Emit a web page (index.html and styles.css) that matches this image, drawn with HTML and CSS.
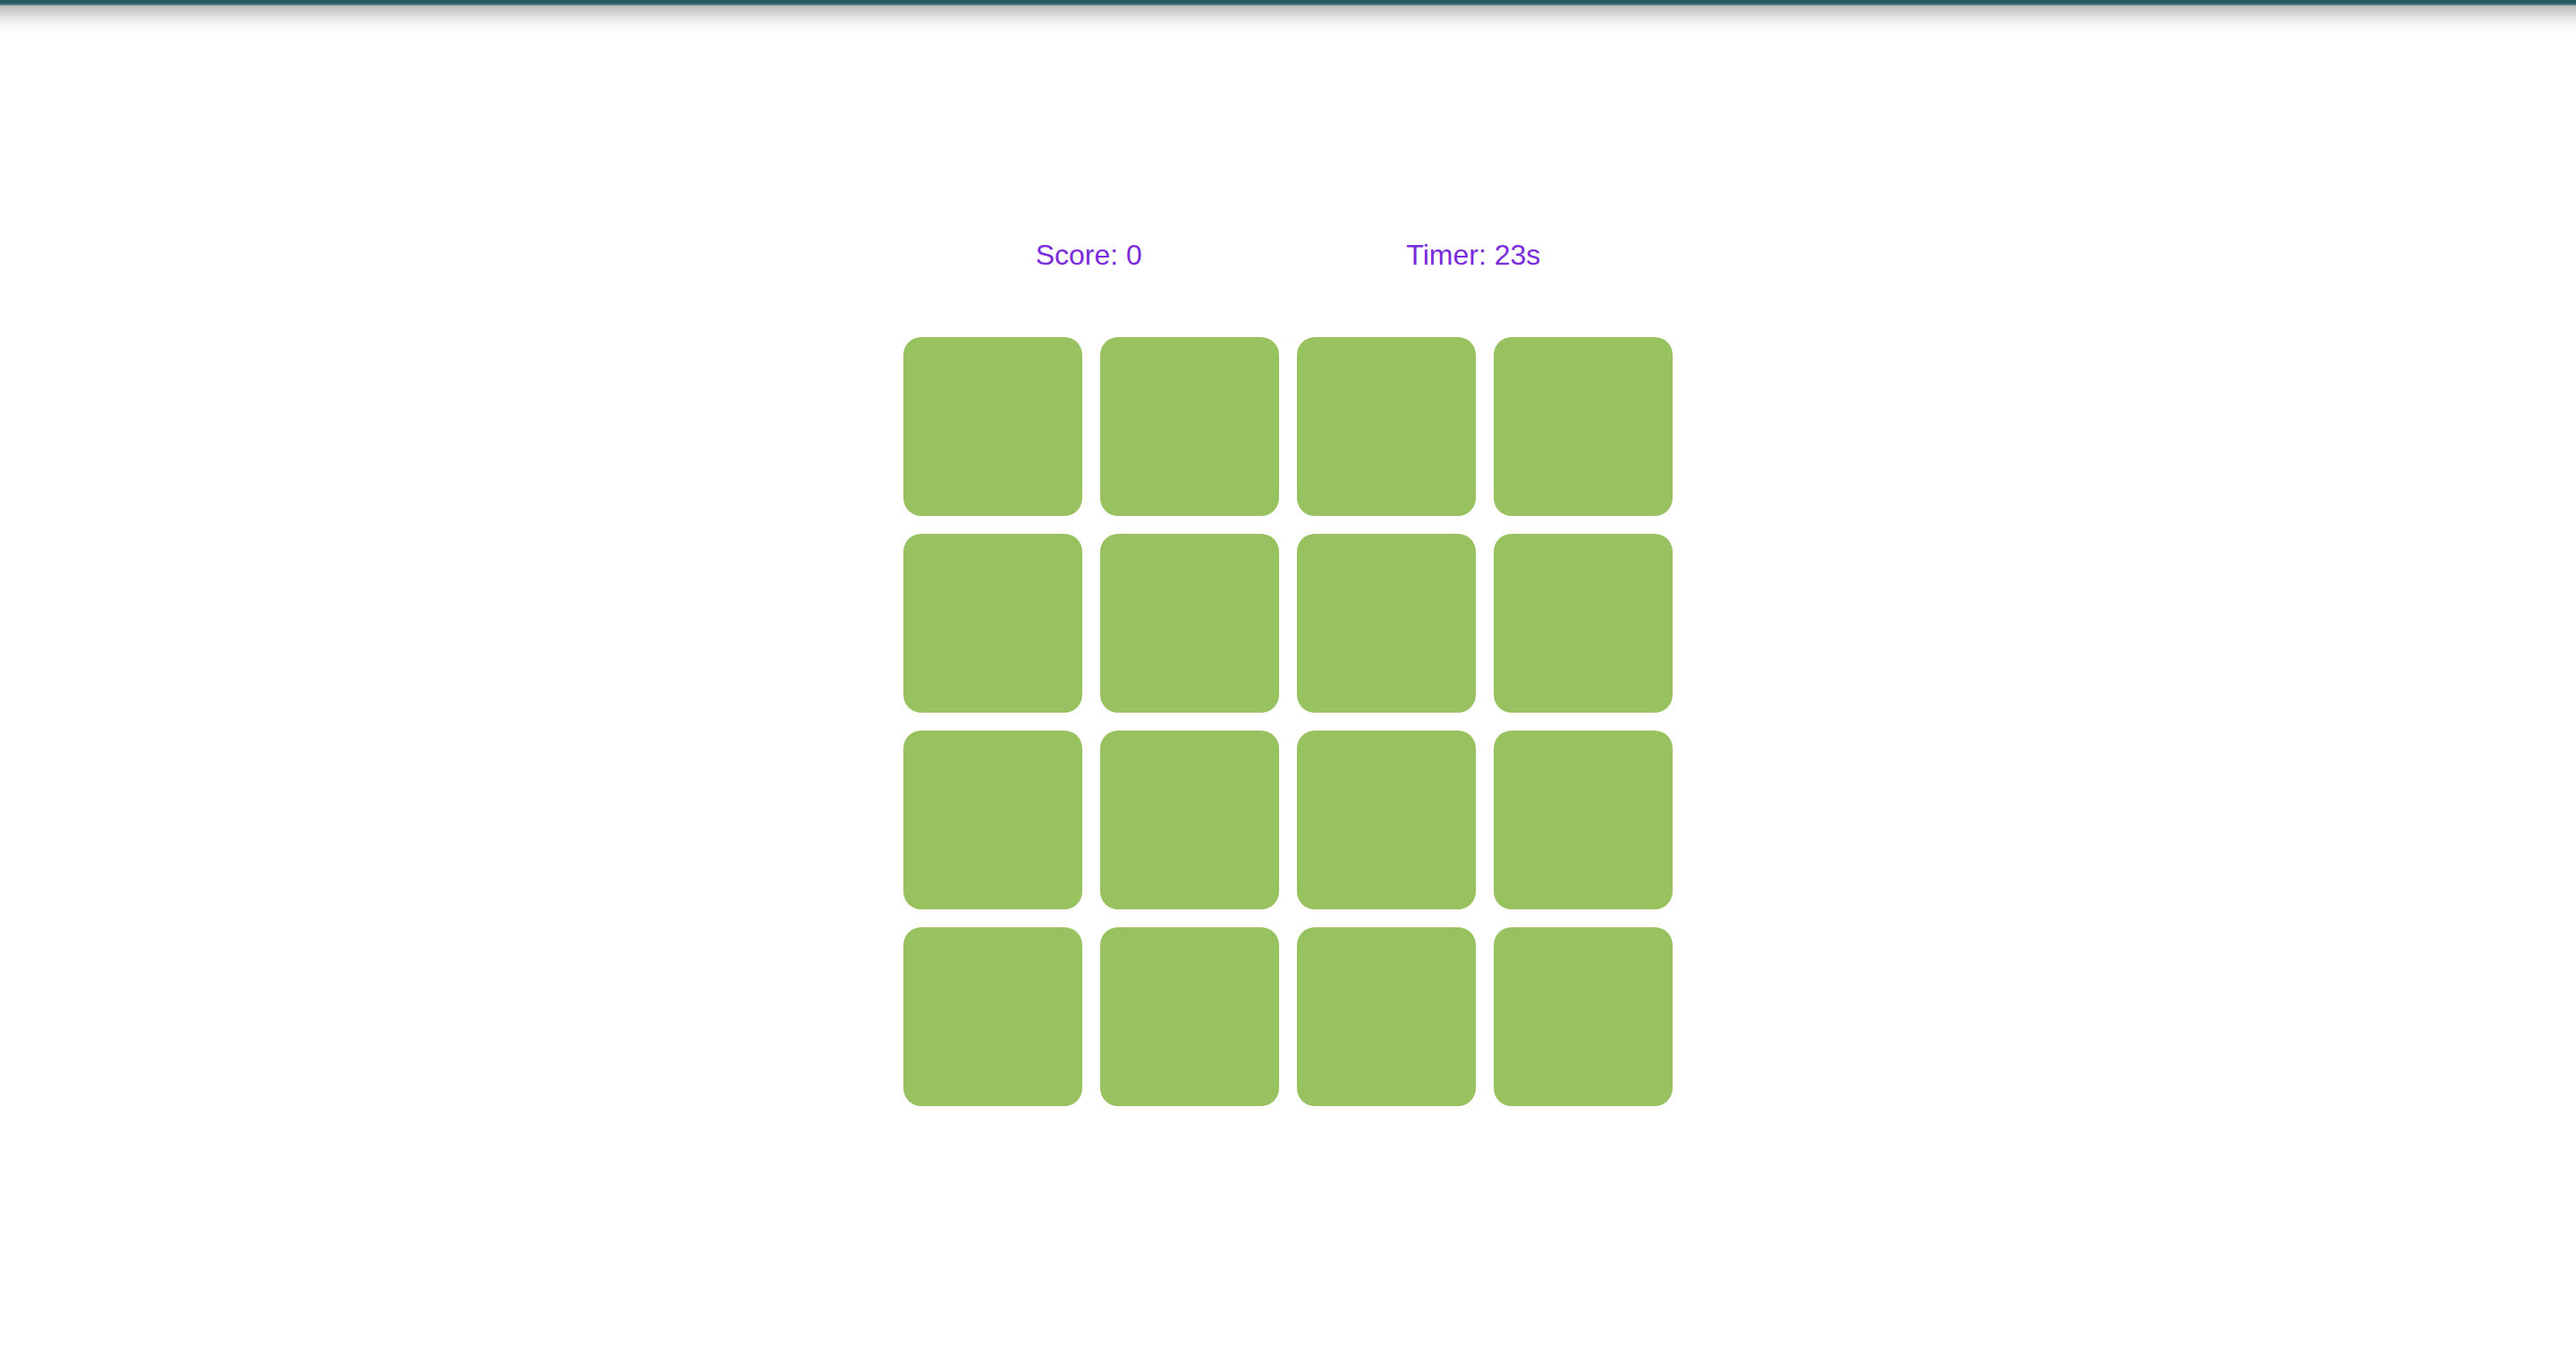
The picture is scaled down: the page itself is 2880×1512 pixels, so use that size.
FILE: index.html
```html
<!DOCTYPE html>
<html lang="en">
<head>
<meta charset="utf-8">
<title>Memory Game</title>
<link rel="stylesheet" href="styles.css">
</head>
<body>
<header class="topbar"></header>
<main class="game">
  <div class="stats">
    <p class="stat">Score: 0</p>
    <p class="stat">Timer: 23s</p>
  </div>
  <div class="board">
    <button class="card" type="button" aria-label="Card 1"></button>
    <button class="card" type="button" aria-label="Card 2"></button>
    <button class="card" type="button" aria-label="Card 3"></button>
    <button class="card" type="button" aria-label="Card 4"></button>
    <button class="card" type="button" aria-label="Card 5"></button>
    <button class="card" type="button" aria-label="Card 6"></button>
    <button class="card" type="button" aria-label="Card 7"></button>
    <button class="card" type="button" aria-label="Card 8"></button>
    <button class="card" type="button" aria-label="Card 9"></button>
    <button class="card" type="button" aria-label="Card 10"></button>
    <button class="card" type="button" aria-label="Card 11"></button>
    <button class="card" type="button" aria-label="Card 12"></button>
    <button class="card" type="button" aria-label="Card 13"></button>
    <button class="card" type="button" aria-label="Card 14"></button>
    <button class="card" type="button" aria-label="Card 15"></button>
    <button class="card" type="button" aria-label="Card 16"></button>
  </div>
</main>
</body>
</html>
```
FILE: styles.css
```css
* {
  box-sizing: border-box;
}

body {
  margin: 0;
  background: #fff;
  font-family: "Liberation Sans", Arial, sans-serif;
}

.topbar {
  height: 6px;
  border-bottom: 2px solid #4a7b80;
  background: #245b60;
}

.game {
  display: flex;
  flex-direction: column;
  align-items: center;
  gap: 74px;
  padding: 261px 20px 40px;
  background: linear-gradient(#bcbcbc, #d0d0d0 7px, #e6e6e6 14px, #f7f7f7 22px, #fff 32px);
}

.stats {
  display: flex;
  justify-content: space-around;
  width: 100%;
  max-width: 860px;
}

.stat {
  margin: 0;
  color: #7a2bdc;
  font-size: 32px;
  line-height: 36px;
}

.board {
  display: grid;
  grid-template-columns: repeat(4, 200px);
  gap: 20px;
}

.card {
  height: 200px;
  padding: 0;
  border: 0;
  border-radius: 20px;
  background: #98c15f;
  cursor: pointer;
}
```
